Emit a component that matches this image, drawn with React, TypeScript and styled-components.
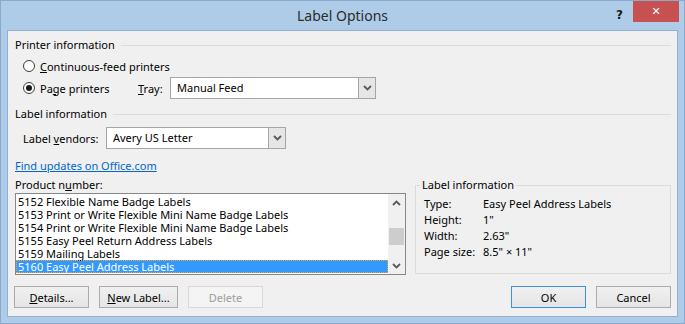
import styled, { createGlobalStyle } from "styled-components";

const GlobalStyle = createGlobalStyle`
  html, body {
    margin: 0;
    padding: 0;
  }
  body {
    font-family: "Noto Sans", "Open Sans", sans-serif;
    font-size: 11px;
    color: #000;
    background: #ffffff;
  }
`;

const products = [
  "5152 Flexible Name Badge Labels",
  "5153 Print or Write Flexible Mini Name Badge Labels",
  "5154 Print or Write Flexible Mini Name Badge Labels",
  "5155 Easy Peel Return Address Labels",
  "5159 Mailing Labels",
  "5160 Easy Peel Address Labels",
];

const labelInfo = [
  ["Type:", "Easy Peel Address Labels"],
  ["Height:", "1\""],
  ["Width:", "2.63\""],
  ["Page size:", "8.5\" × 11\""],
];

const Chevron = ({ up }: { up?: boolean }) => (
  <svg width="9" height="6" viewBox="0 0 9 6">
    <path
      d={up ? "M1 5 L4.5 1.5 L8 5" : "M1 1 L4.5 4.5 L8 1"}
      fill="none"
      stroke="#5a5a5a"
      strokeWidth="1.8"
    />
  </svg>
);

const App = () => {
  return (
    <>
      <GlobalStyle />
      <Window>
        <TitleBar>
          <span />
          <Title>Label Options</Title>
          <TitleControls>
            <HelpMark>?</HelpMark>
            <CloseButton>✕</CloseButton>
          </TitleControls>
        </TitleBar>

        <Client>
          <SectionHeader>Printer information</SectionHeader>
          <RadioGroup>
            <RadioRow>
              <RadioOption>
                <Radio />
                <span>
                  <U>C</U>ontinuous-feed printers
                </span>
              </RadioOption>
            </RadioRow>
            <RadioRow>
              <RadioOption $width={115}>
                <Radio $checked />
                <span>
                  Pa<U>g</U>e printers
                </span>
              </RadioOption>
              <FieldLabel $width={32}>
                <U>T</U>ray:
              </FieldLabel>
              <Select $width={206}>
                <SelectValue>Manual Feed</SelectValue>
                <SelectButton>
                  <Chevron />
                </SelectButton>
              </Select>
            </RadioRow>
          </RadioGroup>

          <SectionHeader $gap={7}>Label information</SectionHeader>
          <VendorRow>
            <FieldLabel $width={83}>
              Label <U>v</U>endors:
            </FieldLabel>
            <Select $width={180}>
              <SelectValue>Avery US Letter</SelectValue>
              <SelectButton>
                <Chevron />
              </SelectButton>
            </Select>
          </VendorRow>

          <UpdateLink href="#">Find updates on Office.com</UpdateLink>

          <BottomArea>
            <ProductColumn>
              <ColumnLabel>
                Product n<U>u</U>mber:
              </ColumnLabel>
              <ListBox>
                <ListItems>
                  {products.map((p, i) => (
                    <ListRow key={p} $selected={i === products.length - 1}>
                      {p}
                    </ListRow>
                  ))}
                </ListItems>
                <ScrollBar>
                  <ScrollArrow>
                    <Chevron up />
                  </ScrollArrow>
                  <ScrollTrack>
                    <ScrollThumb $top={17} />
                  </ScrollTrack>
                  <ScrollArrow>
                    <Chevron />
                  </ScrollArrow>
                </ScrollBar>
              </ListBox>
            </ProductColumn>

            <InfoGroup>
              <InfoLegend>Label information</InfoLegend>
              <InfoGrid>
                {labelInfo.map(([k, v]) => (
                  <InfoRow key={k}>
                    <span>{k}</span>
                    <span>{v}</span>
                  </InfoRow>
                ))}
              </InfoGrid>
            </InfoGroup>
          </BottomArea>

          <ButtonBar>
            <ButtonGroup>
              <Button>
                <U>D</U>etails...
              </Button>
              <Button $width={79}>
                <U>N</U>ew Label...
              </Button>
              <Button disabled>Delete</Button>
            </ButtonGroup>
            <ButtonGroup>
              <Button $default>OK</Button>
              <Button>Cancel</Button>
            </ButtonGroup>
          </ButtonBar>
        </Client>
      </Window>
    </>
  );
};

const Window = styled.div`
  width: 685px;
  height: 324px;
  box-sizing: border-box;
  background: #aecbe8;
  border: 1px solid #8ba9cd;
  display: flex;
  flex-direction: column;
`;

const TitleBar = styled.div`
  height: 29px;
  display: grid;
  grid-template-columns: 1fr auto 1fr;
  align-items: center;
`;

const Title = styled.div`
  font-size: 14px;
  color: #2b2b2b;
  line-height: 20px;
  padding-top: 1px;
`;

const TitleControls = styled.div`
  justify-self: end;
  align-self: start;
  display: flex;
  align-items: flex-start;
  gap: 10px;
  margin-right: 5px;
`;

const HelpMark = styled.span`
  font-family: "DejaVu Sans", sans-serif;
  font-weight: bold;
  font-size: 12px;
  color: #1a1a1a;
  line-height: 12px;
  margin-top: 8px;
`;

const CloseButton = styled.div`
  width: 46px;
  height: 21px;
  background: #c75050;
  color: #ffffff;
  font-family: "DejaVu Sans", sans-serif;
  font-size: 11px;
  font-weight: bold;
  display: flex;
  align-items: center;
  justify-content: center;
`;

const Client = styled.div`
  margin: 0 6px;
  height: 287px;
  box-sizing: border-box;
  border: 1px solid #93afd1;
  background: #f0f0f0;
  padding: 6px 6px 0 7px;
  display: flex;
  flex-direction: column;
`;

const SectionHeader = styled.div<{ $gap?: number }>`
  display: flex;
  align-items: center;
  gap: 6px;
  height: 16px;
  line-height: 16px;
  margin-top: ${(p) => p.$gap ?? 0}px;
  white-space: nowrap;

  &::after {
    content: "";
    flex: 1;
    height: 1px;
    background: #dcdcdc;
  }
`;

const U = styled.span`
  text-decoration: underline;
`;

const RadioGroup = styled.div`
  margin-top: 2px;
  padding-left: 8px;
`;

const RadioRow = styled.div`
  display: flex;
  align-items: center;
  height: 22px;
`;

const RadioOption = styled.div<{ $width?: number }>`
  display: flex;
  align-items: center;
  gap: 5px;
  width: ${(p) => (p.$width ? `${p.$width}px` : "auto")};
  white-space: nowrap;
`;

const Radio = styled.span<{ $checked?: boolean }>`
  width: 12px;
  height: 12px;
  box-sizing: border-box;
  border-radius: 50%;
  border: 1px solid #3c3c3c;
  background: #ffffff;
  display: flex;
  align-items: center;
  justify-content: center;

  &::after {
    content: "";
    width: 6px;
    height: 6px;
    border-radius: 50%;
    background: ${(p) => (p.$checked ? "#1a1a1a" : "transparent")};
  }
`;

const FieldLabel = styled.span<{ $width: number }>`
  width: ${(p) => p.$width}px;
  white-space: nowrap;
`;

const Select = styled.div<{ $width: number }>`
  width: ${(p) => p.$width}px;
  height: 22px;
  box-sizing: border-box;
  border: 1px solid #a5a5a5;
  background: #ffffff;
  display: flex;
`;

const SelectValue = styled.div`
  flex: 1;
  padding-left: 6px;
  line-height: 20px;
  white-space: nowrap;
`;

const SelectButton = styled.div`
  width: 17px;
  box-sizing: border-box;
  border-left: 1px solid #a5a5a5;
  background: #e6e6e6;
  display: flex;
  align-items: center;
  justify-content: center;
`;

const VendorRow = styled.div`
  display: flex;
  align-items: center;
  margin-top: 5px;
  padding-left: 8px;
`;

const UpdateLink = styled.a`
  display: block;
  width: fit-content;
  margin-top: 9px;
  line-height: 16px;
  color: #0066cc;
  text-decoration: underline;
`;

const BottomArea = styled.div`
  display: flex;
  gap: 9px;
  margin-top: 3px;
`;

const ProductColumn = styled.div`
  width: 391px;
  display: flex;
  flex-direction: column;
`;

const ColumnLabel = styled.div`
  line-height: 16px;
  height: 16px;
`;

const ListBox = styled.div`
  height: 82px;
  box-sizing: border-box;
  border: 1px solid #828790;
  background: #ffffff;
  display: flex;
`;

const ListItems = styled.div`
  flex: 1;
  padding-top: 1px;
`;

const ListRow = styled.div<{ $selected?: boolean }>`
  height: 13px;
  line-height: 13px;
  padding-left: 2px;
  white-space: nowrap;
  background: ${(p) => (p.$selected ? "#3399ff" : "transparent")};
  color: ${(p) => (p.$selected ? "#ffffff" : "#000000")};
  outline: ${(p) => (p.$selected ? "1px dotted #f5a623" : "none")};
  outline-offset: -1px;
`;

const ScrollBar = styled.div`
  width: 17px;
  background: #f0f0f0;
  display: flex;
  flex-direction: column;
`;

const ScrollArrow = styled.div`
  height: 17px;
  display: flex;
  align-items: center;
  justify-content: center;
`;

const ScrollTrack = styled.div`
  flex: 1;
  position: relative;
`;

const ScrollThumb = styled.div<{ $top: number }>`
  position: absolute;
  left: 1px;
  right: 1px;
  top: ${(p) => p.$top}px;
  height: 17px;
  background: #cdcdcd;
`;

const InfoGroup = styled.fieldset`
  flex: 1;
  margin: 0;
  height: 97px;
  box-sizing: border-box;
  padding: 3px 8px 0 8px;
  border: 1px solid #dcdcdc;
  min-width: 0;
`;

const InfoLegend = styled.legend`
  padding: 0 2px;
  margin-left: -4px;
  line-height: 16px;
`;

const InfoGrid = styled.div`
  display: flex;
  flex-direction: column;
`;

const InfoRow = styled.div`
  display: grid;
  grid-template-columns: 59px 1fr;
  height: 16px;
  line-height: 16px;
  white-space: nowrap;
`;

const ButtonBar = styled.div`
  display: flex;
  justify-content: space-between;
  margin-top: 11px;
  margin-left: -1px;
`;

const ButtonGroup = styled.div`
  display: flex;
  gap: 10px;
`;

const Button = styled.button<{ $width?: number; $default?: boolean }>`
  width: ${(p) => p.$width ?? 75}px;
  height: 22px;
  box-sizing: border-box;
  padding: 0;
  font-family: inherit;
  font-size: 11px;
  color: #000;
  border: 1px solid ${(p) => (p.$default ? "#3c8fe6" : "#acacac")};
  background: linear-gradient(#f0f0f0, #e5e5e5);
  border-radius: 0;

  &:disabled {
    color: #9d9d9d;
    border-color: #d9d9d9;
    background: #f4f4f4;
  }
`;

export default App;
